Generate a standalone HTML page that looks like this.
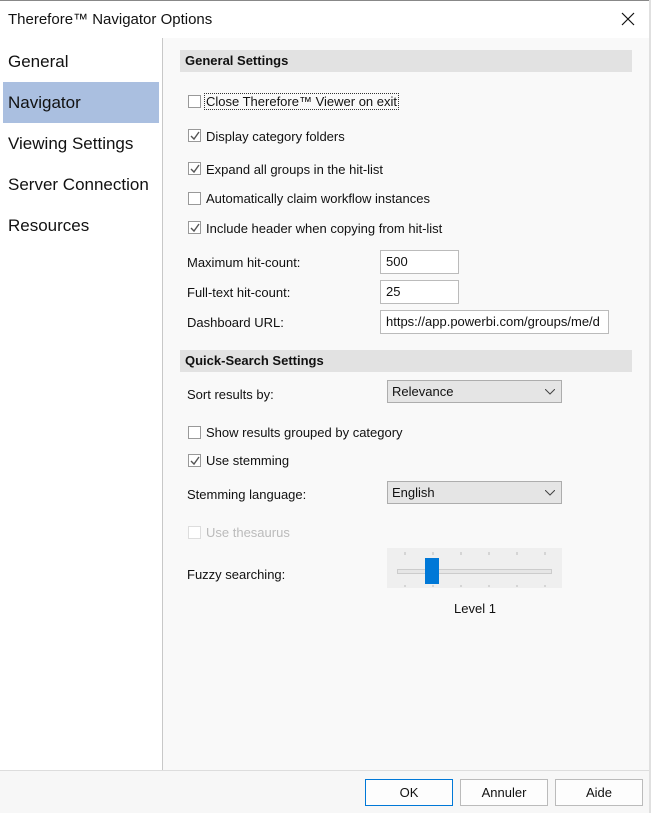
<!DOCTYPE html>
<html><head><meta charset="utf-8"><style>
*{box-sizing:border-box;margin:0;padding:0}
body{width:651px;height:813px;position:relative;background:#f9f9f9;font-family:"Liberation Sans",Arial,sans-serif;font-size:13px;color:#111;overflow:hidden}
.a{position:absolute;white-space:nowrap}
.title{left:0;top:0;width:651px;height:38px;background:#fff;border-top:1px solid #888}
.side{left:0;top:38px;width:163px;height:733px;background:#fff;border-right:1px solid #c8c8c8}
.si{font-size:17px;left:8px}
.hdr{background:#e2e2e2;font-weight:bold;height:22px;line-height:22px;padding-left:5px;width:452px;left:180px}
.cb{width:13px;height:13px;border:1px solid #999;background:#fff;left:188px}
.cb svg{position:absolute;left:1px;top:1px}
.lb{left:206px}
.in{background:#fff;border:1px solid #bbb;height:24px;line-height:22px;padding-left:5px}
.dd{background:#e5e5e5;border:1px solid #adadad;height:23px;line-height:21px;padding-left:4px;width:175px;left:387px}
.dd svg{position:absolute;right:6px;top:8px}
.btn{top:779px;width:88px;height:27px;border:1px solid #bbb;background:#fdfdfd;text-align:center;line-height:25px;font-size:13px}
</style></head><body>
<div class="a title"></div>
<div class="a" style="left:8px;top:11px;font-size:15px">Therefore™ Navigator Options</div>
<svg class="a" style="left:621px;top:12px" width="14" height="14"><path d="M1 1L13 13M13 1L1 13" stroke="#111" stroke-width="1.2"/></svg>
<div class="a side"></div>
<div class="a si" style="top:52px">General</div>
<div class="a" style="left:3px;top:82px;width:156px;height:41px;background:#aabfe0"></div>
<div class="a si" style="top:93px">Navigator</div>
<div class="a si" style="top:134px">Viewing Settings</div>
<div class="a si" style="top:175px">Server Connection</div>
<div class="a si" style="top:216px">Resources</div>

<div class="a hdr" style="top:50px">General Settings</div>
<div class="a cb" style="top:95px"></div><div class="a lb" style="top:94px;outline:1px dotted #333;padding:0 1px;left:205px">Close Therefore™ Viewer on exit</div>
<div class="a cb" style="top:129px"><svg width="10" height="10"><path d="M1 5L4 8L9 1" stroke="#555" stroke-width="1.4" fill="none"/></svg></div><div class="a lb" style="top:129px">Display category folders</div>
<div class="a cb" style="top:162px"><svg width="10" height="10"><path d="M1 5L4 8L9 1" stroke="#555" stroke-width="1.4" fill="none"/></svg></div><div class="a lb" style="top:162px">Expand all groups in the hit-list</div>
<div class="a cb" style="top:192px"></div><div class="a lb" style="top:191px">Automatically claim workflow instances</div>
<div class="a cb" style="top:221px"><svg width="10" height="10"><path d="M1 5L4 8L9 1" stroke="#555" stroke-width="1.4" fill="none"/></svg></div><div class="a lb" style="top:221px">Include header when copying from hit-list</div>

<div class="a" style="left:187px;top:255px">Maximum hit-count:</div>
<div class="a in" style="left:380px;top:250px;width:79px">500</div>
<div class="a" style="left:187px;top:285px">Full-text hit-count:</div>
<div class="a in" style="left:380px;top:280px;width:79px">25</div>
<div class="a" style="left:187px;top:315px">Dashboard URL:</div>
<div class="a in" style="left:380px;top:310px;width:229px;overflow:hidden">https://app.powerbi.com/groups/me/d</div>

<div class="a hdr" style="top:350px">Quick-Search Settings</div>
<div class="a" style="left:187px;top:387px">Sort results by:</div>
<div class="a dd" style="top:380px">Relevance<svg width="10" height="6"><path d="M0 0L5 5L10 0" stroke="#444" fill="none"/></svg></div>
<div class="a cb" style="top:426px"></div><div class="a lb" style="top:425px">Show results grouped by category</div>
<div class="a cb" style="top:454px"><svg width="10" height="10"><path d="M1 5L4 8L9 1" stroke="#555" stroke-width="1.4" fill="none"/></svg></div><div class="a lb" style="top:453px">Use stemming</div>
<div class="a" style="left:187px;top:487px">Stemming language:</div>
<div class="a dd" style="top:481px">English<svg width="10" height="6"><path d="M0 0L5 5L10 0" stroke="#444" fill="none"/></svg></div>
<div class="a cb" style="top:526px;border-color:#ddd"></div><div class="a lb" style="top:525px;color:#bbb">Use thesaurus</div>
<div class="a" style="left:187px;top:567px">Fuzzy searching:</div>
<div class="a" style="left:387px;top:548px;width:175px;height:40px;background:#efefef"></div>
<svg class="a" style="left:387px;top:548px" width="175" height="40">
<g stroke="#bbb"><path d="M18 4v3M46 4v3M74 4v3M102 4v3M130 4v3M158 4v3M18 37v2M46 37v2M74 37v2M102 37v2M130 37v2M158 37v2"/></g>
<rect x="10.5" y="21.5" width="154" height="4" fill="#e6e6e6" stroke="#ccc"/>
<rect x="38" y="10" width="14" height="26" fill="#0078d7"/>
</svg>
<div class="a" style="left:454px;top:601px">Level 1</div>

<div class="a" style="left:0;top:770px;width:649px;height:1px;background:#ddd"></div>
<div class="a" style="left:0;top:771px;width:649px;height:42px;background:#f7f7f7"></div>
<div class="a" style="left:649px;top:0;width:2px;height:813px;background:#e0e0e0"></div>
<div class="a btn" style="left:365px;border:1px solid #0078d7">OK</div>
<div class="a btn" style="left:460px">Annuler</div>
<div class="a btn" style="left:555px">Aide</div>
</body></html>
